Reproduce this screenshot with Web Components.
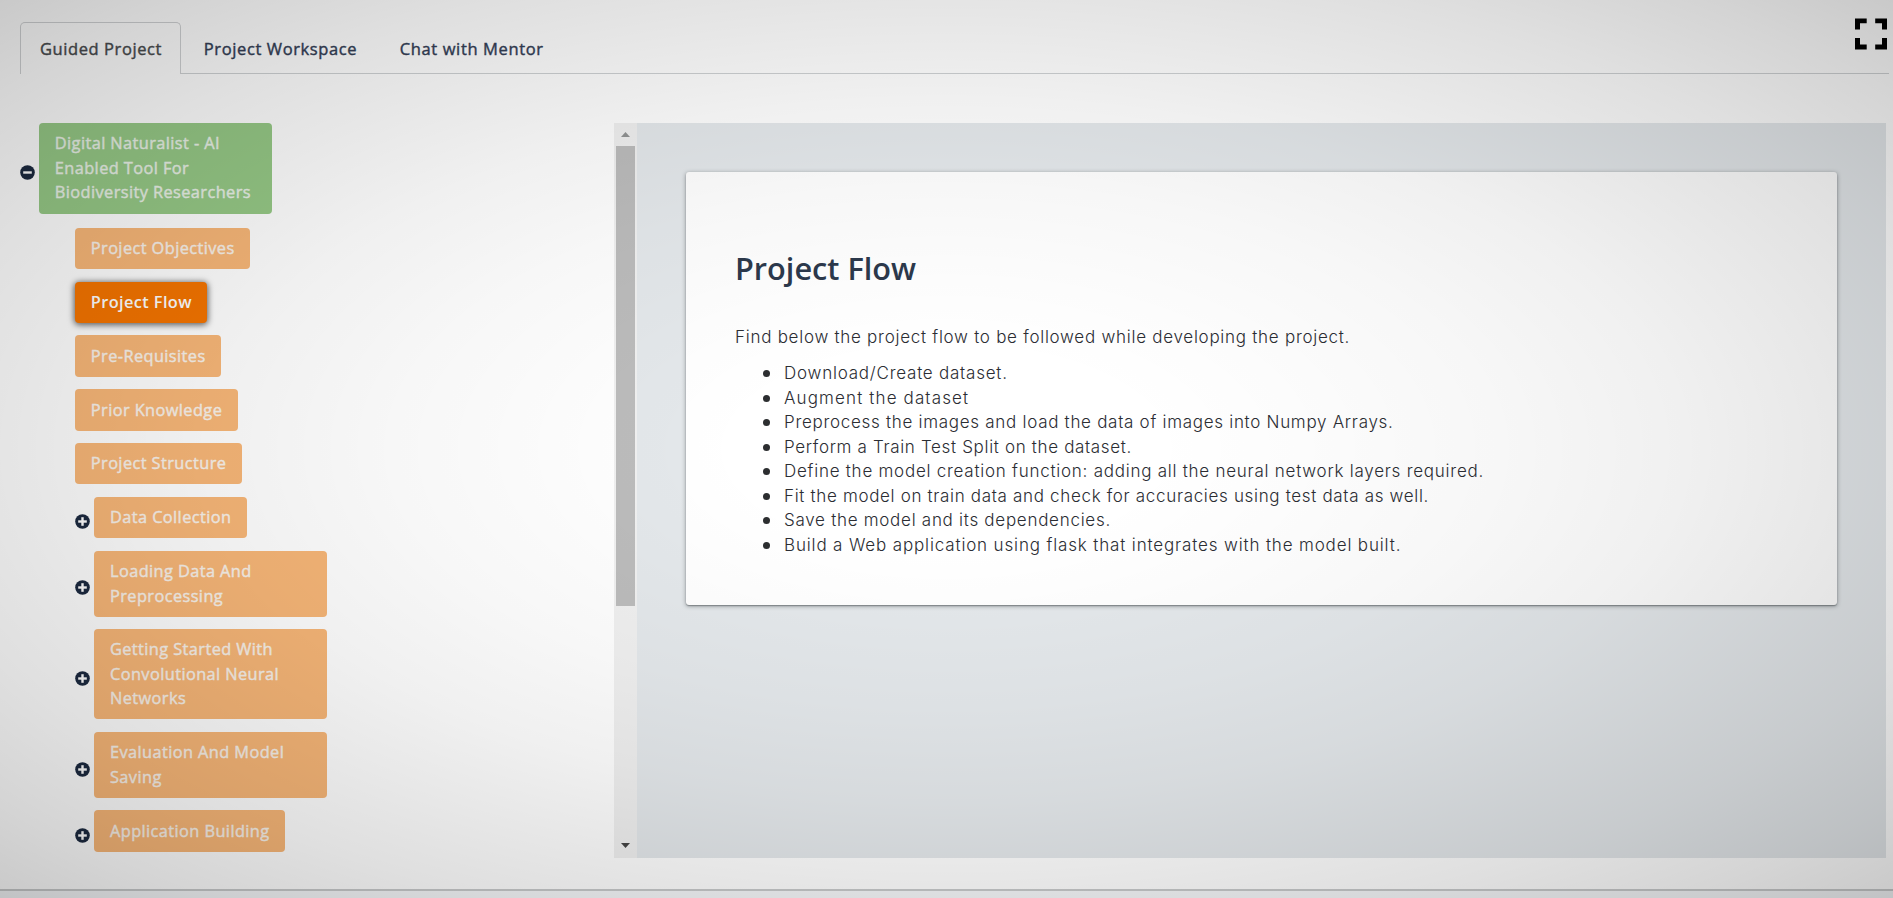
<!DOCTYPE html>
<html lang="en">
<head>
<meta charset="utf-8">
<title>Guided Project</title>
<style>
html,body{margin:0;height:100%;overflow:hidden;background:#fff}
body{font-family:"Open Sans","Noto Sans",sans-serif;color:#222f40}
</style>
</head>
<body>
<project-page></project-page>
<script>
const define = (name, html, setup) => customElements.define(name, class extends HTMLElement {
  constructor() {
    super();
    this.attachShadow({mode: 'open'}).innerHTML = html;
  }
  connectedCallback() { if (setup) setup(this, this.shadowRoot); }
});

define('tab-item', `
<style>
:host{display:block;box-sizing:border-box;height:51px;padding:0 19px 0 19.5px;border:1px solid transparent;border-bottom:0;border-radius:5px 5px 0 0;font-size:16.5px;letter-spacing:.62px;font-weight:400;-webkit-text-stroke:.4px;line-height:51.5px;white-space:nowrap;color:#333e56}
:host([active]){padding:0 18.3px 0 19px;letter-spacing:.58px;border-color:#d0d2d4;background:#fff;color:#484b4e;height:52px;margin-bottom:-1px}
</style><slot></slot>`);

define('tab-bar', `
<style>
:host{display:flex;box-sizing:border-box;height:52px;border-bottom:1px solid #cfd2d4;margin:22px 4px 0 20px;gap:2px}
</style><slot></slot>`);

define('fullscreen-icon', `
<style>:host{display:block;position:absolute;left:1855px;top:18px;width:32px;height:32px;z-index:3}svg{display:block}</style>
<svg width="32" height="32" viewBox="0 0 32 32"><path d="M0 .6h11.7v4.7H5v6.2H0zM20.2.6H32v10.900h-5V5.300h-6.800zM0 20h5v6.500h6.700v4.900H0zM27 20h5v11.400H20.200v-4.900H27z" fill="#000"/></svg>`);

define('toggle-icon', `
<style>:host{display:block;flex:none;width:15px;height:15px;margin-top:8.500px}svg{display:block}#v{display:block}:host([open]) #v{display:none}</style>
<svg width="15" height="15" viewBox="0 0 15 15"><circle cx="7.5" cy="7.5" r="7.3" fill="#1c2a40"/><path d="M3.2 7.500h8.600" stroke="#fff" stroke-width="2.400"/><path id="v" d="M7.500 3.200v8.600" stroke="#fff" stroke-width="2.400"/></svg>`);

define('tree-node', `
<style>
:host{display:flex;align-items:center;gap:4.2px;margin:0 0 12.55px 75px}
:host([root]){margin:0 0 14.200px 20px;gap:4px}
.b{box-sizing:border-box;max-width:232.5px;padding:8.4px 15.400px 8.4px 15.8px;border-radius:4px;background:#f8b778;color:#f8f2ea;font-size:16.35px;line-height:24.5px;font-weight:400;letter-spacing:.41px;-webkit-text-stroke:.4px}
:host([root]) .b{background:#96c986;color:#e9f1e6;padding:7.800px 15.6px 9px 15.8px}
:host([active]) .b{background:#f47400;color:#fff;font-weight:600;letter-spacing:.39px;-webkit-text-stroke:0;box-shadow:0 1px 6px 1px rgba(0,0,0,.6)}
</style>
<span id="i"></span><div class="b"><slot></slot></div>`, (el, root) => {
  const i = root.getElementById('i');
  if (!i) return;
  if (el.hasAttribute('leaf')) { i.remove(); return; }
  const t = document.createElement('toggle-icon');
  if (el.hasAttribute('root')) t.setAttribute('open', '');
  i.replaceWith(t);
});

define('scroll-track', `
<style>
:host{display:flex;flex-direction:column;align-items:center;width:23px;background:#f0f0f0}
.a{height:23px;display:flex;align-items:center}
.t{width:19px;height:460px;background:#bcbcbc;margin-bottom:auto}
svg{display:block}
.a:first-child{padding-top:2px;height:21px}
.a:last-child{padding-bottom:1px}
</style>
<div class="a"><svg width="9" height="5" viewBox="0 0 9 5"><path d="M0 5 4.500 0 9 5z" fill="#929494"/></svg></div>
<div class="t"></div>
<div class="a"><svg width="9" height="5" viewBox="0 0 9 5"><path d="M0 0h9L4.500 5z" fill="#454545"/></svg></div>`);

define('content-card', `
<style>
:host{display:block;box-sizing:border-box;width:1150.5px;height:432.400px;padding:74px 49px 0;border-radius:3px;background:#fff;box-shadow:0 1px 4px rgba(50,55,60,.5),0 1px 1px rgba(50,55,60,.35);font-family:Inter,sans-serif;font-weight:300;font-size:17px;line-height:24.5px;color:#2b2d33}
</style><slot></slot>`);

define('flow-line', `
<style>:host{display:block;white-space:nowrap;position:relative}
i{display:none}
:host([bullet]){margin-left:49px}
:host([bullet]) i{display:block;position:absolute;left:-21px;top:9px;width:7px;height:7px;border-radius:50%;background:#2c2e30}
</style><i></i><slot></slot>`, el => { el.style.letterSpacing = el.getAttribute('tracking') + 'px'; });

define('card-title', `
<style>:host{display:block;font:600 30.700px/44px "Open Sans",sans-serif;color:#2c394c;margin-bottom:35px;white-space:nowrap}</style><slot></slot>`);

define('project-page', `
<style>
:host{display:flex;flex-direction:column;position:relative;width:1893px;height:898px;overflow:hidden;background:#fff}
:host::after{content:"";position:absolute;inset:0;pointer-events:none;z-index:2;background:radial-gradient(ellipse 1339px 635px at 50% 50%,rgba(0,0,0,0) 15%,rgba(0,0,0,.01) 26%,rgba(0,0,0,.03) 41%,rgba(0,0,0,.06) 55%,rgba(0,0,0,.09) 66%,rgba(0,0,0,.125) 78%,rgba(0,0,0,.17) 90%,rgba(0,0,0,.21) 100%)}
main{display:flex;margin-top:49.3px;height:735px}
nav{width:614px;flex:none;display:flex;flex-direction:column;align-items:flex-start}
section{width:1249px;box-sizing:border-box;padding:49px 49px 0;background:#e4e8eb}
footer{margin-top:31px;border-top:2px solid #c8cacb;flex:1;background:#f5f7f9}
.p{margin-bottom:11.500px}
</style>
<tab-bar><tab-item active>Guided Project</tab-item><tab-item>Project Workspace</tab-item><tab-item>Chat with Mentor</tab-item></tab-bar>
<fullscreen-icon></fullscreen-icon>
<main>
<nav>
<tree-node root>Digital Naturalist - AI Enabled Tool For Biodiversity Researchers</tree-node>
<tree-node leaf>Project Objectives</tree-node>
<tree-node leaf active>Project Flow</tree-node>
<tree-node leaf>Pre-Requisites</tree-node>
<tree-node leaf>Prior Knowledge</tree-node>
<tree-node leaf>Project Structure</tree-node>
<tree-node>Data Collection</tree-node>
<tree-node>Loading Data And Preprocessing</tree-node>
<tree-node>Getting Started With Convolutional Neural Networks</tree-node>
<tree-node>Evaluation And Model Saving</tree-node>
<tree-node>Application Building</tree-node>
</nav>
<scroll-track></scroll-track>
<section>
<content-card>
<card-title>Project Flow</card-title>
<flow-line class="p" tracking="0.73">Find below the project flow to be followed while developing the project.</flow-line>
<flow-line bullet tracking="0.77">Download/Create dataset.</flow-line>
<flow-line bullet tracking="1.13">Augment the dataset</flow-line>
<flow-line bullet tracking="0.71">Preprocess the images and load the data of images into Numpy Arrays.</flow-line>
<flow-line bullet tracking="0.66">Perform a Train Test Split on the dataset.</flow-line>
<flow-line bullet tracking="0.75">Define the model creation function: adding all the neural network layers required.</flow-line>
<flow-line bullet tracking="0.67">Fit the model on train data and check for accuracies using test data as well.</flow-line>
<flow-line bullet tracking="0.72">Save the model and its dependencies.</flow-line>
<flow-line bullet tracking="0.85">Build a Web application using flask that integrates with the model built.</flow-line>
</content-card>
</section>
</main>
<footer></footer>`);
</script>
</body>
</html>
